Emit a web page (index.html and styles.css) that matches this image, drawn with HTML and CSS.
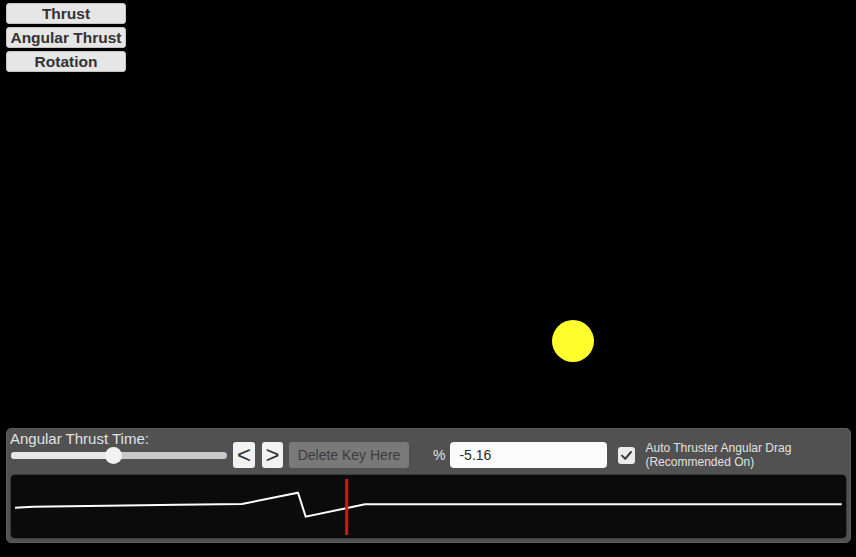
FILE: index.html
```html
<!DOCTYPE html>
<html>
<head>
<meta charset="utf-8">
<link rel="stylesheet" href="styles.css">
</head>
<body>
<nav class="modes">
  <button class="mode">Thrust</button>
  <button class="mode">Angular Thrust</button>
  <button class="mode">Rotation</button>
</nav>
<div class="scene">
  <div class="sun"></div>
</div>
<section class="panel">
  <div class="toolbar">
    <div class="timecol">
      <div class="time-label">Angular Thrust Time:</div>
      <div class="slider">
        <div class="track"><div class="fill" style="width:103px"></div></div>
        <div class="thumb" style="left:94px"></div>
      </div>
    </div>
    <button class="nav-btn">&lt;</button>
    <button class="nav-btn next">&gt;</button>
    <button class="delete-btn">Delete Key Here</button>
    <span class="pct">%</span>
    <div class="value-input">-5.16</div>
    <div class="checkbox">
      <svg width="17" height="17" viewBox="0 0 17 17"><path d="M4 8.6 L7.2 11.8 L13 5" fill="none" stroke="#3a3a3a" stroke-width="2" stroke-linecap="round" stroke-linejoin="round"/></svg>
    </div>
    <div class="check-label">Auto Thruster Angular Drag<br>(Recommended On)</div>
  </div>
  <div class="graph">
    <svg width="835" height="63" viewBox="0 0 835 63">
      <polyline points="4,32.7 22,31.7 95,30.7 167,29.7 231,29 287,17.7 294.7,41.7 354,29.3 830.7,29.3" fill="none" stroke="#ffffff" stroke-width="2" stroke-linejoin="miter"/>
      <line x1="335.7" y1="4" x2="335.7" y2="60" stroke="#d81414" stroke-width="3"/>
    </svg>
  </div>
</section>
</body>
</html>
```
FILE: styles.css
```css
html, body {
  margin: 0;
  padding: 0;
  background: #000;
}
body {
  width: 856px;
  height: 557px;
  display: flex;
  flex-direction: column;
  font-family: "Liberation Sans", Arial, sans-serif;
  overflow: hidden;
}
.modes {
  display: flex;
  flex-direction: column;
  gap: 3px;
  margin: 3px 0 0 6px;
}
.mode {
  width: 120px;
  height: 21px;
  box-sizing: border-box;
  padding: 0;
  border: 1px solid #c4c4c4;
  border-radius: 3px;
  background: #e6e6e6;
  color: #333;
  font-family: "Liberation Sans", Arial, sans-serif;
  font-weight: bold;
  font-size: 15.5px;
  line-height: 18px;
  text-align: center;
}
.scene {
  flex: 1;
  position: relative;
}
.sun {
  position: absolute;
  left: 552px;
  top: 248px;
  width: 42px;
  height: 42px;
  border-radius: 50%;
  background: #ffff2e;
}
.panel {
  margin: 0 0 14px 6px;
  width: 845px;
  height: 115px;
  box-sizing: border-box;
  border: 1px solid #5c5c5c;
  border-radius: 5px;
  background: #515151;
  display: flex;
  flex-direction: column;
}
.toolbar {
  height: 46px;
  display: flex;
  align-items: flex-start;
}
.timecol {
  width: 217px;
  margin-left: 3px;
  margin-top: 1px;
}
.time-label {
  color: #e2e2e2;
  font-size: 15px;
  line-height: 17px;
  white-space: nowrap;
}
.slider {
  position: relative;
  margin-left: 1px;
  width: 216px;
  height: 17px;
}
.track {
  position: absolute;
  left: 0;
  right: 0;
  top: 5px;
  height: 7px;
  border-radius: 4px;
  background: #c9c9c9;
  overflow: hidden;
}
.fill {
  height: 100%;
  background: #e8e8e8;
}
.thumb {
  position: absolute;
  top: 0;
  width: 17px;
  height: 17px;
  border-radius: 50%;
  background: #f2f2f2;
}
.nav-btn {
  margin: 13px 0 0 6px;
  width: 22px;
  height: 26px;
  padding: 0;
  border: none;
  border-radius: 3px;
  background: #f2f2f2;
  color: #333;
  font-family: "Liberation Sans", Arial, sans-serif;
  font-size: 24px;
  line-height: 24px;
}
.nav-btn.next {
  margin-left: 7px;
  width: 21px;
}
.delete-btn {
  margin: 13px 0 0 6px;
  width: 120px;
  height: 26px;
  padding: 0;
  border: none;
  border-radius: 3px;
  background: #797979;
  color: #3c3c3c;
  font-family: "Liberation Sans", Arial, sans-serif;
  font-size: 14px;
  line-height: 26px;
}
.pct {
  margin: 13px 0 0 24px;
  color: #e0e0e0;
  font-size: 14px;
  line-height: 26px;
}
.value-input {
  margin: 13px 0 0 5px;
  width: 157px;
  height: 26px;
  box-sizing: border-box;
  padding-left: 9px;
  border-radius: 4px;
  background: #fbfbfb;
  color: #2a2a2a;
  font-size: 14px;
  line-height: 26px;
}
.checkbox {
  margin: 18px 0 0 11px;
  width: 17px;
  height: 17px;
  border-radius: 3px;
  background: #ececec;
}
.checkbox svg {
  display: block;
}
.check-label {
  margin: 12px 0 0 10px;
  color: #e0e0e0;
  font-size: 12px;
  line-height: 14px;
  white-space: nowrap;
}
.graph {
  margin-left: 4px;
  width: 835px;
  height: 63px;
  border-radius: 4px;
  background: #0b0b0b;
  box-shadow: 0 0 0 1px #3c3c3c;
}
.graph svg {
  display: block;
}
```
